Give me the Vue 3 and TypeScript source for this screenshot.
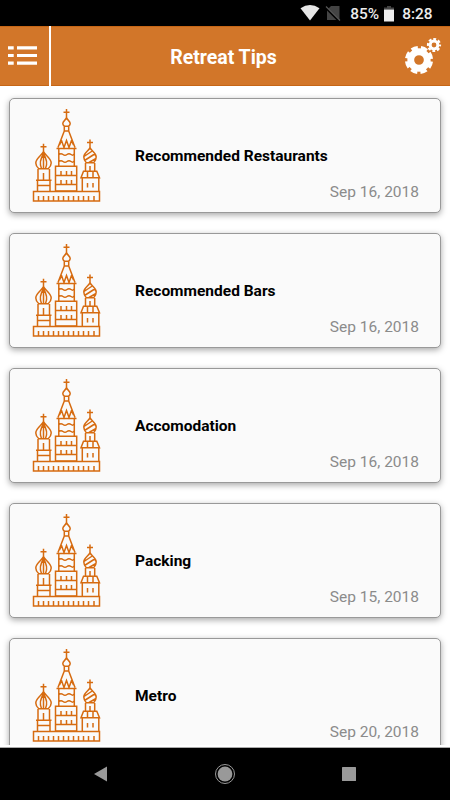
<script setup lang="ts">
interface Tip {
  title: string
  date: string
}

const tips: Tip[] = [
  { title: 'Recommended Restaurants', date: 'Sep 16, 2018' },
  { title: 'Recommended Bars', date: 'Sep 16, 2018' },
  { title: 'Accomodation', date: 'Sep 16, 2018' },
  { title: 'Packing', date: 'Sep 15, 2018' },
  { title: 'Metro', date: 'Sep 20, 2018' },
]
</script>

<template>
  <div class="screen">
    <div class="status">
      <svg class="wifi" width="20" height="16" viewBox="0 0 20 16"><path d="M.5 3.2Q10-3 19.500 3.200L10 15.500Z" fill="#e6e6e6" /></svg>
      <svg class="sim" width="16" height="16" viewBox="0 0 16 16">
        <path d="M6 1h8.500v14H2V5Z" fill="#444" />
        <path d="M.5 2.500 14 16" stroke="#000" stroke-width="2.200" />
        <path d="M1 1.500 15 15.500" stroke="#555" stroke-width="1.300" />
      </svg>
      <span class="battery-text">85%</span>
      <svg class="battery" width="10" height="16" viewBox="0 0 10 16"><path d="M3 0h4v1.500h3v2H0v-2h3Z" fill="#444" /><path d="M0 3.500h10v12H0Z" fill="#ececec" /></svg>
      <span class="clock">8:28</span>
    </div>

    <header class="header">
      <button class="menu" aria-label="Menu">
        <svg width="30" height="20" viewBox="0 0 30 20" fill="#fff">
          <path d="M0 .2h5.700v3.200H0zM9 .2h20v3.200H9zM0 7.900h5.700v3.200H0zM9 7.900h20v3.200H9zM0 15.600h5.700v3.200H0zM9 15.600h20v3.200H9z" />
        </svg>
      </button>
      <h1>Retreat Tips</h1>
      <button class="settings" aria-label="Settings">
        <svg width="38" height="38" viewBox="0 0 38 38" fill="none" stroke="#fff">
          <circle cx="15" cy="23" r="8.250" stroke-width="6.800" />
          <circle cx="15" cy="23" r="12.500" stroke-width="3.200" stroke-dasharray="6.600 3.217" stroke-dashoffset="-1.610" />
          <circle cx="30" cy="8" r="3.900" stroke-width="3" />
          <circle cx="30" cy="8" r="6" stroke-width="2.200" stroke-dasharray="2.800 1.912" stroke-dashoffset="1.400" />
        </svg>
      </button>
    </header>

    <main class="list">
      <article v-for="tip in tips" :key="tip.title" class="card">
        <svg class="cathedral" width="70" height="96" viewBox="31 107 70 96">
          <path d="M66.500 109v9M63.500 112.200h6M66.500 117.500C66 120 62.800 121 62.800 123.500q0 1.500 1.500 2.700h4.400q1.500-1.200 1.500-2.700C70.200 121 67 120 66.500 117.500ZM64.300 126.200v4.800h4.400v-4.800M64.300 131 58 147.500M68.700 131 75 147.500M56.500 148.500h20M59.500 145l2-4.500 2.500 7 2.500-7 2.500 7 2.500-7 2 4.500M58.800 149v17M74.300 149v17M59 154.500q2-1.500 4 0t4 0 4 0 3-.5M59 161.500q2-1.500 4 0t4 0 4 0 3-.5M55.500 166.300h21.200V191H55.500ZM56 175.500h20M56 184.500h20M61 171v4M66.500 171v4M71.500 171v4M61 180v4M66.500 180v4M71.500 180v4" />
          <path d="M43.500 143.800V169M43.500 173v7M40.500 146.800h6M43.500 151.500C42.500 155 35.800 158 35.800 163q0 3 3 5.800h9.400q3-2.800 3-5.800C51.200 158 44.500 155 43.500 151.500ZM43.500 154c-4 6-4 10-2 14.500M43.500 154c4 6 4 10 2 14.500M38 169v11M49.500 169v11M36 180.300h15.500M37.500 180.500V191M50 180.500V191M38 185.500h12" />
          <path d="M90 139.500v9M87 142.500h6M90 147.500C89 151 83.800 152.500 83.800 157q0 3 2.500 5.800h7.400q2.500-2.800 2.500-5.800C96.200 152.500 91 151 90 147.500ZM84 156.500l9-6M84.500 160.500l11-7M89 162.500l7-4M85.500 163v8M94.700 163v8M90 166v5M83.500 171.200h13.300l2.700 6.500H81ZM87.500 171v6.500M93 171v6.500M82.300 178v13M98.800 178v13M87.500 183v4.500M93 183v4.500" />
          <path d="M33.500 191.500h66v9.500h-66ZM38.500 196v4.500M43.500 196v4.500M48.500 196v4.500M53.500 196v4.500M58.500 196v4.500M63.500 196v4.500M68.500 196v4.500M73.500 196v4.500M78.500 196v4.500M83.500 196v4.500M88.500 196v4.500M94 196v4.500" />
        </svg>
        <h2>{{ tip.title }}</h2>
        <time>{{ tip.date }}</time>
      </article>
    </main>

    <nav class="navbar">
      <svg width="14" height="16" viewBox="0 0 14 16" fill="#999"><path d="M13 .5v15L0 8Z" /></svg>
      <svg width="22" height="22" viewBox="0 0 22 22"><circle cx="11" cy="11" r="9.500" fill="none" stroke="#999" /><circle cx="11" cy="11" r="7.400" fill="#999" /></svg>
      <svg width="14" height="14" viewBox="0 0 14 14"><rect width="14" height="14" rx=".5" fill="#999" /></svg>
    </nav>
  </div>
</template>

<style>
body {
  margin: 0;
}
</style>

<style scoped>
.screen {
  width: 450px;
  height: 800px;
  display: flex;
  flex-direction: column;
  overflow: hidden;
  background: #fff;
  font-family: Roboto, sans-serif;
}
.status {
  flex: 0 0 26px;
  display: flex;
  align-items: center;
  justify-content: flex-end;
  box-sizing: border-box;
  padding: 1px 17.500px 0 0;
  background: #000;
  color: #ececec;
  font-size: 15.400px;
  font-weight: 500;
}
.wifi {
  margin-bottom: 1px;
}
.sim {
  margin: 0 9px 1px 5px;
}
.battery {
  margin: 0 8px 0 5px;
}
.header {
  flex: 0 0 60px;
  box-sizing: border-box;
  display: grid;
  grid-template-columns: 51px 1fr 46px;
  align-items: center;
  background: #d27629;
  border-top: 1px solid #c66616;
  border-bottom: 1px solid #c66616;
}
button {
  border: 0;
  padding: 0;
  background: none;
}
.menu {
  align-self: stretch;
  display: flex;
  align-items: center;
  box-sizing: border-box;
  padding: 0 0 1px 7.500px;
  margin: -1px 0;
  border-right: 2px solid #fff;
}
.settings {
  display: flex;
}
h1 {
  margin: 3px 0 0;
  padding-right: 8px;
  text-align: center;
  color: #fff;
  font-size: 19.500px;
  line-height: 24px;
  font-weight: 700;
}
.list {
  flex: 0 0 659px;
  box-sizing: border-box;
  padding: 12px 9px 0;
  display: flex;
  flex-direction: column;
  gap: 20px;
  overflow: hidden;
}
.card {
  flex: 0 0 115px;
  box-sizing: border-box;
  display: grid;
  grid-template-columns: 70px 1fr;
  grid-template-rows: 72px 1fr;
  column-gap: 34px;
  padding: 8px 21px 0;
  background: #fafafa;
  border: 1px solid #999;
  border-radius: 5px;
  box-shadow: 0 2px 6px rgba(0, 0, 0, 0.35);
}
.cathedral {
  grid-row: 1 / 3;
  fill: none;
  stroke: #d66b10;
  stroke-width: 1.500;
}
h2 {
  margin: 39px 0 0;
  font-size: 15.500px;
  line-height: 20px;
  font-weight: 700;
  color: #000;
}
time {
  justify-self: end;
  margin-top: 3px;
  font-size: 15.500px;
  line-height: 20px;
  color: #8b8b8b;
}
.navbar {
  flex: 0 0 53px;
  margin-top: auto;
  box-sizing: border-box;
  border-top: 1px solid #aaa;
  background: #000;
  display: flex;
  align-items: center;
  justify-content: space-between;
  padding: 0 94px;
}
</style>
